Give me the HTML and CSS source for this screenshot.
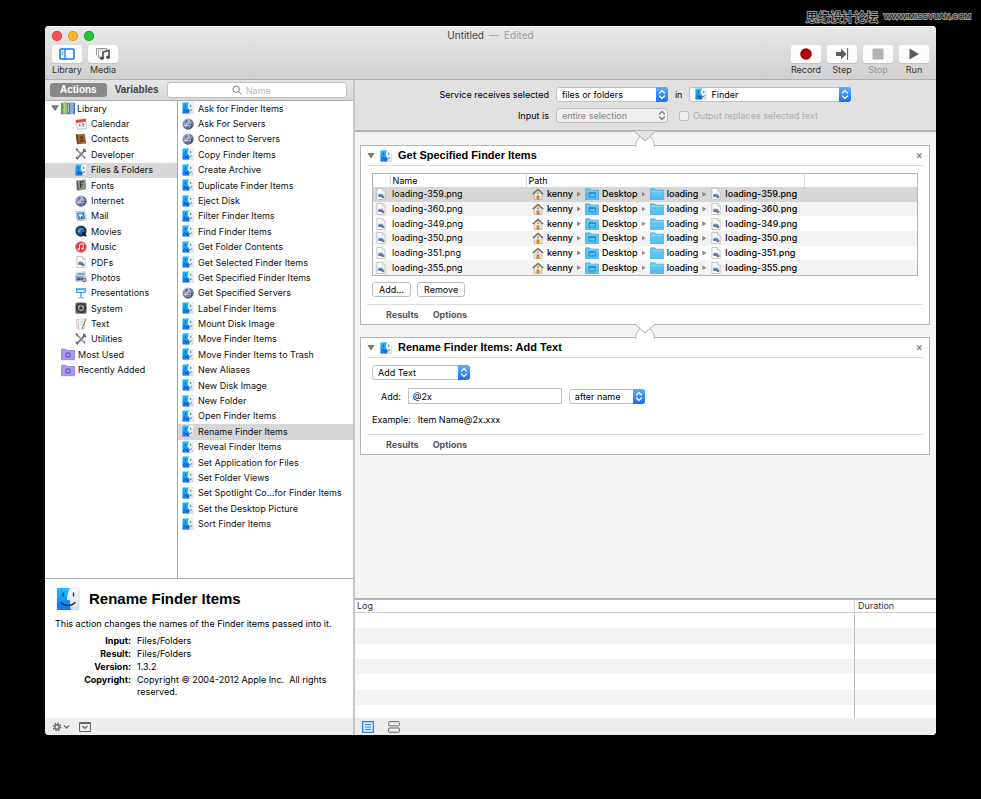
FILE: index.html
```html
<!DOCTYPE html>
<html lang="en">
<head>
    <meta charset="UTF-8">
    <meta name="viewport" content="width=device-width, initial-scale=1.0">
    <title>Untitled - Edited</title>
    <link rel="stylesheet" href="styles.css">
</head>
<body>
    <!-- Icon set -->
    <svg class="sprite" aria-hidden="true">
        <defs>
            <linearGradient id="blue" x1="0" y1="0" x2="0" y2="1"><stop offset="0" stop-color="#19c3fb"/><stop offset="1" stop-color="#1670f0"/></linearGradient>
            <linearGradient id="pale" x1="0" y1="0" x2="0" y2="1"><stop offset="0" stop-color="#fafbfd"/><stop offset="1" stop-color="#d5dfec"/></linearGradient>
            <radialGradient id="ball" cx=".35" cy=".3" r=".75"><stop offset="0" stop-color="#d6dcf2"/><stop offset=".5" stop-color="#8d96b8"/><stop offset="1" stop-color="#3c4468"/></radialGradient>
            <linearGradient id="sky" x1="0" y1="0" x2="0" y2="1"><stop offset="0" stop-color="#6ccdf8"/><stop offset="1" stop-color="#4fbcf2"/></linearGradient>
        </defs>
        <symbol id="finder" viewBox="0 0 24 24">
            <rect x="1" y="1" width="22" height="22" rx="1" fill="url(#pale)" stroke="#c3cbd5" stroke-width=".6"/>
            <path d="M2 1h12c-2 4-3 8-3 12h3c0 4 0 7 1 10H2a1 1 0 0 1-1-1V2a1 1 0 0 1 1-1z" fill="url(#blue)"/>
            <path d="M7 6v3M17.500 6v3M5 15.500c3.500 4 10.500 4 14 0" fill="none" stroke="#153a66" stroke-width="1.400" stroke-linecap="round"/>
        </symbol>
        <symbol id="globe" viewBox="0 0 16 16">
            <circle cx="8" cy="8" r="7.500" fill="url(#ball)"/>
            <path d="M3 4l3-2 2 2-1 2-2 1-1 2-2-1zM8 9l3-2 3 1-1 3-3 3-1-3zM10 2l3 2-2 1z" fill="#3f4b80" opacity=".75"/>
            <path d="M5 3c-2 2-2 6 0 9M3 10h9M9 2c3 4 3 8 0 12" stroke="#e4e9f8" stroke-width=".7" fill="none"/>
        </symbol>
        <symbol id="calendar" viewBox="0 0 16 16">
            <path d="M1 3l13-2 1.500 13L3 15z" fill="#f7f7f7" stroke="#999" stroke-width=".7"/>
            <path d="M1 3l13-2 .5 4L1.500 6.500z" fill="#e2463d"/>
            <path d="M5.500 8.500l1-.5v4M9 8h3l-1.500 4" stroke="#555" fill="none"/>
        </symbol>
        <symbol id="contacts" viewBox="0 0 16 16">
            <path d="M1 2l12-1 2 13-12 1z" fill="#9a6a33"/><path d="M1 2l2-.2 2 13-2 .2z" fill="#5f3d1b"/>
            <circle cx="9" cy="6" r="2" fill="#5f3d1b"/><path d="M6 12c0-4 6-4 6.500-1z" fill="#5f3d1b"/>
        </symbol>
        <symbol id="tools" viewBox="0 0 16 16">
            <path d="M2 2l11 11M13.500 2.500L3 14" stroke="#6b6e78" stroke-width="2.200" stroke-linecap="round"/>
            <path d="M3 3l9 9" stroke="#c5c9d4" stroke-width=".8"/>
            <path d="M11 1l1 3 3 1M1 1l3 1M1 12l3 3" stroke="#575a64" stroke-width="1.500" fill="none"/>
        </symbol>
        <symbol id="fonts" viewBox="0 0 16 16">
            <path d="M2 2l12-1.500 1 13L4 15.500 2 14z" fill="#8b9591"/><path d="M2 2l2 1 1 12.500L3 14z" fill="#4f5956"/>
            <path d="M7.500 12V4l4-.5M7.500 8l3-.3" stroke="#343c39" stroke-width="1.500" fill="none"/>
        </symbol>
        <symbol id="mail" viewBox="0 0 16 16">
            <path d="M1 2l12-1 2 12-12 1.500z" fill="#f5f5f5" stroke="#8d98a5" stroke-width=".8"/>
            <path d="M2.500 3.500l9.500-1 1.500 9.500-9.500 1z" fill="#3d85d4"/>
            <path d="M4 5l3 1 1-2 2 3 2 3-3-1-2 2-1-3z" fill="#e6f0fa"/><path d="M8 8l3 1-2 3z" fill="#394d67"/>
        </symbol>
        <symbol id="movies" viewBox="0 0 16 16">
            <circle cx="8" cy="8" r="7.500" fill="#33363b"/><circle cx="7.500" cy="7.500" r="4.500" fill="#1670c9"/>
            <path d="M4 9c1-4 4-5 7-4-3 0-4 2-5 5z" fill="#49c3f5"/><path d="M9 10l3-1 4 6h-4z" fill="#191b20"/>
        </symbol>
        <symbol id="music" viewBox="0 0 16 16">
            <circle cx="8" cy="8" r="7.500" fill="#ea2a3b"/><circle cx="8" cy="8" r="6.800" fill="none" stroke="#f98692"/>
            <path d="M6 11V4.500l5-1V10" fill="none" stroke="#fff" stroke-width="1.300"/><circle cx="5" cy="11" r="1.500" fill="#fff"/><circle cx="10" cy="10" r="1.500" fill="#fff"/>
        </symbol>
        <symbol id="doc" viewBox="0 0 16 16">
            <path d="M2.500.500h7.500l3.500 3.500v11.500h-11z" fill="#fcfcfc" stroke="#b0b0b0"/><path d="M10 .5V4h3.500" fill="#eee" stroke="#b0b0b0" stroke-width=".8"/>
            <path d="M4.500 7.500h6v4h-6z" fill="#6b9bd8"/><path d="M4.500 10l2-1 2 1 2-1v2.500h-6z" fill="#566c8c"/><circle cx="10.500" cy="11.500" r="2" fill="#77797e"/>
        </symbol>
        <symbol id="photos" viewBox="0 0 16 16">
            <path d="M2 2l12-1 .5 9-12 1z" fill="#f3f3f3" stroke="#aaa" stroke-width=".7"/><path d="M3 3l10-.8.2 3L3.200 6z" fill="#6da5d9"/>
            <path d="M0 6l12-1 1 8-12 1z" fill="#eee" stroke="#999" stroke-width=".7"/><path d="M1 7l10-.8.5 5.500L2 12.500z" fill="#6ea0d2"/><path d="M2 11l3-2 3 1 3-1 .5 3L2 12.500z" fill="#42627d"/>
            <circle cx="12.500" cy="12" r="3" fill="#6f6f6f"/><circle cx="12.500" cy="12" r="1.300" fill="#ddd"/>
        </symbol>
        <symbol id="keynote" viewBox="0 0 16 16">
            <path d="M1 1.500h14l-1 6.500H2z" fill="#2f9be6"/><path d="M3 3.500h10l-.5 3h-9z" fill="#e4f3fd"/>
            <path d="M8 8v6" stroke="#2f9be6" stroke-width="1.500"/><path d="M4.500 14.500h7" stroke="#848b92" stroke-width="1.300"/>
        </symbol>
        <symbol id="system" viewBox="0 0 16 16">
            <rect x=".5" y=".5" width="15" height="15" rx="2" fill="#66686b"/><circle cx="8" cy="8" r="5.500" fill="none" stroke="#1f2022" stroke-width="2.500" stroke-dasharray="1.800 .8"/>
            <circle cx="8" cy="8" r="4.200" fill="#a4a6a9"/><circle cx="8" cy="8" r="2" fill="#333"/><path d="M8 8V4M8 8l3.500 2M8 8l-3.500 2" stroke="#333"/>
        </symbol>
        <symbol id="text" viewBox="0 0 16 16">
            <path d="M2 2l10-1 1 13-10 1z" fill="#fafafa" stroke="#b5b5b5" stroke-width=".8"/><path d="M4 3l1 11" stroke="#e59999"/>
            <path d="M6 5l5-.5M6 7l5-.5M6.500 9l4-.4" stroke="#bbb" stroke-width=".7"/><path d="M14.500 1l-4 11-1 2.500" stroke="#6c6c6c" stroke-width="1.300" fill="none"/>
        </symbol>
        <symbol id="books" viewBox="0 0 16 16">
            <path d="M0 2h3v13H0z" fill="#5f9c43"/><path d="M3 1h4v14H3z" fill="#89c264"/><path d="M7 2h4v13H7z" fill="#7c62c0"/><path d="M11 1h3v14h-3z" fill="#78b9e2"/><path d="M14 2h2v13h-2z" fill="#566fa8"/>
            <path d="M1 1h13M4.500 3v10M8.500 4v9" stroke="#d9ead0" stroke-width=".8"/>
        </symbol>
        <symbol id="smart" viewBox="0 0 16 14">
            <path d="M.5 1.500h5l1.500 1.500h8.500v10.500H.5z" fill="#a99bed" stroke="#8e80d8"/><circle cx="8" cy="8" r="2.500" fill="none" stroke="#7563ca" stroke-width="1.600"/>
        </symbol>
        <symbol id="folder" viewBox="0 0 16 14">
            <path d="M.5 1h5l1.500 1.500h8.500v11H.5z" fill="url(#sky)" stroke="#3aa3da" stroke-width=".8"/><path d="M1 4h14" stroke="#a5e1fb" stroke-width=".6"/>
        </symbol>
        <symbol id="desktop" viewBox="0 0 16 14">
            <path d="M.5 1h5l1.500 1.500h8.500v11H.5z" fill="url(#sky)" stroke="#3aa3da" stroke-width=".8"/><path d="M4.500 5.500h7.500v5H4.500zM4.500 6.300H12" fill="none" stroke="#1c86c8"/>
        </symbol>
        <symbol id="home" viewBox="0 0 16 16">
            <path d="M3 8l5-5 5 5v7.500H3z" fill="#efe9e0" stroke="#999" stroke-width=".8"/><path d="M1 8L8 2l7 6" fill="none" stroke="#8a6a4c" stroke-width="1.900"/>
            <path d="M6 10h4v5.500H6z" fill="#e37e1d"/><circle cx="8" cy="7" r="1.200" fill="#5c9be0"/>
        </symbol>
        <symbol id="updown" viewBox="0 0 12 14">
            <path d="M3.500 5.500L6 3l2.500 2.500M3.500 8.500L6 11l2.500-2.500" fill="none" stroke="currentColor" stroke-width="1.200" stroke-linecap="round" stroke-linejoin="round"/>
        </symbol>
        <symbol id="joint" viewBox="0 0 20 16">
            <path d="M0 16C0 11 2 8 5 6h10c3 2 5 5 5 10z" fill="#fff"/>
            <path d="M.5 16C.5 11 2 8 5 6M19.500 16C19.500 11 18 8 15 6" fill="none" stroke="#b5b5b5"/>
            <path d="M0 0h20v1L10 10 0 1z" fill="currentColor"/><path d="M0 1l10 9 10-9" fill="none" stroke="#a8a8a8"/>
        </symbol>
    </svg>

    <header class="watermark"><span class="forum">思缘设计论坛</span> <span class="site">WWW.MISSYUAN.COM</span></header>

    <div class="window">
        <div class="toolbar">
            <div class="titlebar">
                <div class="lights"><button class="light red" aria-label="Close"></button><button class="light yellow" aria-label="Minimize"></button><button class="light green" aria-label="Zoom"></button></div>
                <div class="title">Untitled<span class="edited">—</span><span class="edited">Edited</span></div>
            </div>
            <div class="tools">
                <button class="tool"><span class="face"><svg width="16" height="12" viewBox="0 0 16 12"><rect x="1" y="1" width="14" height="10" rx="1" fill="#fff" stroke="#1478f0" stroke-width="1.600"/><path d="M6 1v10" stroke="#1478f0" stroke-width="1.300"/><path d="M2.500 4h2M2.500 6h2" stroke="#1478f0"/></svg></span>Library</button>
                <button class="tool"><span class="face"><svg width="16" height="14" viewBox="0 0 16 14"><path d="M6 10H3.500V3M12 2V3M1.500 8.500V1.500h10v2" fill="none" stroke="#999"/><path d="M3.500 3h9M3.500 3v8h3" fill="none" stroke="#aaa" stroke-width=".8"/><path d="M8 11V5l6-1.500V10" fill="none" stroke="#4d4d4d" stroke-width="1.600"/><circle cx="7" cy="11.300" r="1.800" fill="#4d4d4d"/><circle cx="13" cy="10.300" r="1.800" fill="#4d4d4d"/></svg></span>Media</button>
                <button class="tool push"><span class="face"><svg width="12" height="12" viewBox="0 0 12 12"><circle cx="6" cy="6" r="5.800" fill="#b00303"/></svg></span>Record</button>
                <button class="tool"><span class="face"><svg width="14" height="12" viewBox="0 0 14 12"><path d="M1 4h5V.8L11.500 6 6 11.200V8H1z" fill="#5c5c5c"/><path d="M12.600 0v12" stroke="#5c5c5c"/></svg></span>Step</button>
                <button class="tool" disabled><span class="face"><svg width="12" height="12" viewBox="0 0 12 12"><path d="M.5.500h11v11H.5z" fill="#b2b2b2"/></svg></span>Stop</button>
                <button class="tool"><span class="face"><svg width="12" height="12" viewBox="0 0 12 12"><path d="M1.500.500L11 6l-9.500 5.500z" fill="#5c5c5c"/></svg></span>Run</button>
            </div>
        </div>

        <div class="content">
            <aside class="sidebar">
                <div class="tabs">
                    <button class="tab active">Actions</button>
                    <button class="tab">Variables</button>
                    <label class="search">
                        <svg width="10" height="10" viewBox="0 0 10 10"><circle cx="4.200" cy="4.200" r="3.200" fill="none" stroke="#777"/><path d="M6.500 6.500L9.500 9.500" stroke="#777"/></svg>
                        <input type="text" placeholder="Name" aria-label="Name">
                    </label>
                </div>
                <div class="browser">
                    <ul class="list categories">
                        <li class="top"><span class="triangle"></span><svg><use href="#books"/></svg>Library</li>
                        <li><svg><use href="#calendar"/></svg>Calendar</li>
                        <li><svg><use href="#contacts"/></svg>Contacts</li>
                        <li><svg><use href="#tools"/></svg>Developer</li>
                        <li class="selected"><svg><use href="#finder"/></svg>Files &amp; Folders</li>
                        <li><svg><use href="#fonts"/></svg>Fonts</li>
                        <li><svg><use href="#globe"/></svg>Internet</li>
                        <li><svg><use href="#mail"/></svg>Mail</li>
                        <li><svg><use href="#movies"/></svg>Movies</li>
                        <li><svg><use href="#music"/></svg>Music</li>
                        <li><svg><use href="#doc"/></svg>PDFs</li>
                        <li><svg><use href="#photos"/></svg>Photos</li>
                        <li><svg><use href="#keynote"/></svg>Presentations</li>
                        <li><svg><use href="#system"/></svg>System</li>
                        <li><svg><use href="#text"/></svg>Text</li>
                        <li><svg><use href="#tools"/></svg>Utilities</li>
                        <li class="top smart"><svg><use href="#smart"/></svg>Most Used</li>
                        <li class="top smart"><svg><use href="#smart"/></svg>Recently Added</li>
                    </ul>
                    <ul class="list actions">
                        <li><svg><use href="#finder"/></svg>Ask for Finder Items</li>
                        <li><svg><use href="#globe"/></svg>Ask For Servers</li>
                        <li><svg><use href="#globe"/></svg>Connect to Servers</li>
                        <li><svg><use href="#finder"/></svg>Copy Finder Items</li>
                        <li><svg><use href="#finder"/></svg>Create Archive</li>
                        <li><svg><use href="#finder"/></svg>Duplicate Finder Items</li>
                        <li><svg><use href="#finder"/></svg>Eject Disk</li>
                        <li><svg><use href="#finder"/></svg>Filter Finder Items</li>
                        <li><svg><use href="#finder"/></svg>Find Finder Items</li>
                        <li><svg><use href="#finder"/></svg>Get Folder Contents</li>
                        <li><svg><use href="#finder"/></svg>Get Selected Finder Items</li>
                        <li><svg><use href="#finder"/></svg>Get Specified Finder Items</li>
                        <li><svg><use href="#globe"/></svg>Get Specified Servers</li>
                        <li><svg><use href="#finder"/></svg>Label Finder Items</li>
                        <li><svg><use href="#finder"/></svg>Mount Disk Image</li>
                        <li><svg><use href="#finder"/></svg>Move Finder Items</li>
                        <li><svg><use href="#finder"/></svg>Move Finder Items to Trash</li>
                        <li><svg><use href="#finder"/></svg>New Aliases</li>
                        <li><svg><use href="#finder"/></svg>New Disk Image</li>
                        <li><svg><use href="#finder"/></svg>New Folder</li>
                        <li><svg><use href="#finder"/></svg>Open Finder Items</li>
                        <li class="selected"><svg><use href="#finder"/></svg>Rename Finder Items</li>
                        <li><svg><use href="#finder"/></svg>Reveal Finder Items</li>
                        <li><svg><use href="#finder"/></svg>Set Application for Files</li>
                        <li><svg><use href="#finder"/></svg>Set Folder Views</li>
                        <li><svg><use href="#finder"/></svg>Set Spotlight Co...for Finder Items</li>
                        <li><svg><use href="#finder"/></svg>Set the Desktop Picture</li>
                        <li><svg><use href="#finder"/></svg>Sort Finder Items</li>
                    </ul>
                </div>
                <section class="info">
                    <div class="info-head"><svg width="24" height="24"><use href="#finder"/></svg><h1>Rename Finder Items</h1></div>
                    <p>This action changes the names of the Finder items passed into it.</p>
                    <dl>
                        <dt>Input:</dt><dd>Files/Folders</dd>
                        <dt>Result:</dt><dd>Files/Folders</dd>
                        <dt>Version:</dt><dd>1.3.2</dd>
                        <dt>Copyright:</dt><dd>Copyright © 2004-2012 Apple Inc. &nbsp;All rights reserved.</dd>
                    </dl>
                </section>
                <footer class="bottombar">
                    <button class="icon-btn" aria-label="Action menu"><svg width="18" height="10" viewBox="0 0 18 10"><circle cx="5" cy="5" r="3.600" fill="none" stroke="#666" stroke-width="1.600" stroke-dasharray="1.500 1.320"/><circle cx="5" cy="5" r="2.200" fill="none" stroke="#666" stroke-width="1.400"/><path d="M12 3.500l2.500 2.500L17 3.500" fill="none" stroke="#666" stroke-width="1.300"/></svg></button>
                    <button class="icon-btn" aria-label="Hide description"><svg width="12" height="10" viewBox="0 0 12 10"><path d="M.5.500h11v9H.5zM.5 1.500h11" fill="none" stroke="#666"/><path d="M3.500 4L6 6.500 8.500 4" fill="none" stroke="#666" stroke-width="1.200"/></svg></button>
                </footer>
            </aside>

            <main class="workflow">
                <div class="service">
                    <label for="receives">Service receives selected</label>
                    <span class="popup"><select id="receives"><option>files or folders</option></select><svg><use href="#updown"/></svg></span>
                    <label for="app">in</label>
                    <span class="popup with-icon"><svg class="app-icon"><use href="#finder"/></svg><select id="app"><option>Finder</option></select><svg><use href="#updown"/></svg></span>
                    <label for="input">Input is</label>
                    <span class="popup off"><select id="input" disabled><option>entire selection</option></select><svg><use href="#updown"/></svg></span>
                    <label class="check"><input type="checkbox" disabled>Output replaces selected text</label>
                </div>

                <div class="canvas">
                    <section class="card">
                        <svg class="joint first"><use href="#joint"/></svg>
                        <div class="card-head"><span class="triangle"></span><svg><use href="#finder"/></svg><h2>Get Specified Finder Items</h2><button class="close" aria-label="Remove action">✕</button></div>
                        <div class="card-body">
                            <div class="files">
                                <table>
                                    <colgroup><col class="c-icon"><col class="c-name"><col class="c-path"><col></colgroup>
                                    <thead><tr><th></th><th>Name</th><th>Path</th><th></th></tr></thead>
                                    <tbody>
                                        <tr class="selected"><td><svg><use href="#doc"/></svg></td><td>loading-359.png</td><td colspan="2"><div class="path"><svg><use href="#home"/></svg>kenny<i></i><svg class="fold"><use href="#desktop"/></svg>Desktop<i></i><svg class="fold"><use href="#folder"/></svg>loading<i></i><svg><use href="#doc"/></svg>loading-359.png</div></td></tr>
                                        <tr><td><svg><use href="#doc"/></svg></td><td>loading-360.png</td><td colspan="2"><div class="path"><svg><use href="#home"/></svg>kenny<i></i><svg class="fold"><use href="#desktop"/></svg>Desktop<i></i><svg class="fold"><use href="#folder"/></svg>loading<i></i><svg><use href="#doc"/></svg>loading-360.png</div></td></tr>
                                        <tr><td><svg><use href="#doc"/></svg></td><td>loading-349.png</td><td colspan="2"><div class="path"><svg><use href="#home"/></svg>kenny<i></i><svg class="fold"><use href="#desktop"/></svg>Desktop<i></i><svg class="fold"><use href="#folder"/></svg>loading<i></i><svg><use href="#doc"/></svg>loading-349.png</div></td></tr>
                                        <tr><td><svg><use href="#doc"/></svg></td><td>loading-350.png</td><td colspan="2"><div class="path"><svg><use href="#home"/></svg>kenny<i></i><svg class="fold"><use href="#desktop"/></svg>Desktop<i></i><svg class="fold"><use href="#folder"/></svg>loading<i></i><svg><use href="#doc"/></svg>loading-350.png</div></td></tr>
                                        <tr><td><svg><use href="#doc"/></svg></td><td>loading-351.png</td><td colspan="2"><div class="path"><svg><use href="#home"/></svg>kenny<i></i><svg class="fold"><use href="#desktop"/></svg>Desktop<i></i><svg class="fold"><use href="#folder"/></svg>loading<i></i><svg><use href="#doc"/></svg>loading-351.png</div></td></tr>
                                        <tr><td><svg><use href="#doc"/></svg></td><td>loading-355.png</td><td colspan="2"><div class="path"><svg><use href="#home"/></svg>kenny<i></i><svg class="fold"><use href="#desktop"/></svg>Desktop<i></i><svg class="fold"><use href="#folder"/></svg>loading<i></i><svg><use href="#doc"/></svg>loading-355.png</div></td></tr>
                                    </tbody>
                                </table>
                            </div>
                            <div class="buttons"><button class="btn">Add...</button><button class="btn">Remove</button></div>
                        </div>
                        <div class="card-foot"><button>Results</button><button>Options</button></div>
                    </section>

                    <section class="card">
                        <svg class="joint"><use href="#joint"/></svg>
                        <div class="card-head"><span class="triangle"></span><svg><use href="#finder"/></svg><h2>Rename Finder Items: Add Text</h2><button class="close" aria-label="Remove action">✕</button></div>
                        <div class="card-body rename">
                            <span class="popup mode"><select aria-label="Rename mode"><option>Add Text</option></select><svg><use href="#updown"/></svg></span>
                            <div class="add-row">
                                <label for="add">Add:</label>
                                <input type="text" id="add" value="@2x">
                                <span class="popup place"><select aria-label="Position"><option>after name</option></select><svg><use href="#updown"/></svg></span>
                            </div>
                            <div class="example"><span>Example:</span><span>Item Name@2x.xxx</span></div>
                        </div>
                        <div class="card-foot"><button>Results</button><button>Options</button></div>
                    </section>
                </div>

                <section class="log">
                    <div class="log-head"><span>Log</span><span class="duration">Duration</span></div>
                    <div class="log-rows"><div></div><div></div><div></div><div></div><div></div><div></div><div></div></div>
                </section>
                <footer class="bottombar views">
                    <button class="icon-btn" aria-label="Show log"><svg width="12" height="12" viewBox="0 0 12 12"><path d="M.7.700h10.600v10.600H.7z" fill="#e3effd" stroke="#2a80ee" stroke-width="1.300"/><path d="M3 3.500h6M3 6h6M3 8.500h6" stroke="#2a80ee"/></svg></button>
                    <button class="icon-btn" aria-label="Show variables"><svg width="12" height="12" viewBox="0 0 12 12"><rect x=".6" y=".6" width="10.800" height="4.300" rx="1" fill="none" stroke="#666"/><rect x=".6" y="7" width="10.800" height="4.300" rx="1" fill="none" stroke="#666"/></svg></button>
                </footer>
            </main>
        </div>
    </div>
</body>
</html>
```
FILE: styles.css
```css
* {
    box-sizing: border-box;
}

body {
    margin: 0;
    min-height: 100vh;
    display: flex;
    flex-direction: column;
    background: #000;
    color: #111;
    font-family: Inter, "Liberation Sans", Arial, sans-serif;
    font-size: 9px;
    line-height: 13px;
}

button, input, select {
    font: inherit;
    color: inherit;
    margin: 0;
    padding: 0;
    border: 0;
    background: none;
}

svg {
    display: block;
    flex: none;
}

.sprite {
    position: absolute;
    width: 0;
    height: 0;
}

/* Forum mark above the window */
.watermark {
    display: flex;
    justify-content: flex-end;
    align-items: center;
    gap: 6px;
    height: 26px;
    padding: 6px 10px 0 0;
    color: #000;
    -webkit-text-stroke: 2px #999;
    paint-order: stroke;
}

.forum {
    font: 12px "Liberation Sans", "Noto Sans CJK SC", sans-serif;
}

.site {
    font: 8px "Liberation Sans", sans-serif;
}

.window {
    flex: 1;
    display: flex;
    flex-direction: column;
    margin: 0 45px 64px;
    border-radius: 4px;
    overflow: hidden;
    background: #fff;
}

/* Toolbar */
.toolbar {
    height: 54px;
    padding: 1px 7px 0;
    background: linear-gradient(#e9e9e9, #d0d0d0);
    border-bottom: 1px solid #b0b0b0;
    box-shadow: inset 0 1px #f6f6f6;
}

.titlebar {
    display: grid;
    grid-template-columns: 1fr auto 1fr;
    align-items: center;
    height: 17px;
}

.lights {
    display: flex;
    gap: 6px;
}

.light {
    width: 10px;
    height: 10px;
    border-radius: 50%;
}

.red { background: #fc5650; box-shadow: 0 0 0 1px #e2463f inset; }
.yellow { background: #fdb52b; box-shadow: 0 0 0 1px #e09e22 inset; }
.green { background: #28c23c; box-shadow: 0 0 0 1px #1fa930 inset; }

.title {
    font-size: 10px;
    color: #444;
}

.edited {
    color: #9c9c9c;
    margin-left: 5px;
}

.tools {
    display: flex;
    gap: 6px;
    padding-top: 1px;
}

.tool {
    display: flex;
    flex-direction: column;
    align-items: center;
    width: 30px;
    color: #333;
    white-space: nowrap;
}

.tool:disabled {
    color: #999;
}

.push {
    margin-left: auto;
}

.face {
    display: flex;
    align-items: center;
    justify-content: center;
    width: 30px;
    height: 18px;
    border-radius: 3px;
    background: #fcfcfc;
    box-shadow: 0 1px #c2c2c2;
}

.content {
    flex: 1;
    display: flex;
    min-height: 0;
}

/* Sidebar */
.sidebar {
    display: flex;
    flex-direction: column;
    width: 308px;
}

.tabs {
    display: flex;
    align-items: center;
    height: 21px;
    padding: 0 6px 0 5px;
    background: linear-gradient(#e6e6e6, #d6d6d6);
    border-bottom: 1px solid #b0b0b0;
}

.tab {
    height: 14px;
    padding: 0 8px;
    border-radius: 3px;
    font: bold 10px/14px "Liberation Sans", Arial, sans-serif;
    color: #444;
}

.tab.active {
    padding: 0 10px;
    background: #888;
    color: #fff;
}

.search {
    flex: 1;
    display: flex;
    align-items: center;
    justify-content: center;
    gap: 4px;
    height: 16px;
    background: #fff;
    border: 1px solid #c2c2c2;
    border-radius: 3px;
}

.search input {
    width: 36px;
}

.search input::placeholder {
    color: #b8b8b8;
}

.browser {
    flex: 1;
    display: flex;
}

.list {
    display: grid;
    grid-template-rows: repeat(31, minmax(0, 1fr));
    margin: 0;
    padding: 0;
    list-style: none;
}

.list li {
    display: flex;
    align-items: center;
    gap: 4px;
    min-width: 0;
    padding-bottom: 1px;
    white-space: nowrap;
}

.list svg {
    width: 12px;
    height: 12px;
}

.list .selected {
    background: #d6d6d6;
}

.categories {
    width: 133px;
    border-right: 1px solid #a8a8a8;
}

.categories li {
    padding-left: 30px;
}

.categories .top {
    gap: 2px;
    padding-left: 6px;
}

.categories .top svg {
    width: 14px;
    height: 14px;
}

.categories .smart {
    gap: 3px;
    padding-left: 16px;
}

.actions {
    flex: 1;
}

.actions li {
    padding-left: 4px;
}

.triangle {
    width: 8px;
    height: 6px;
    background: #777;
    clip-path: polygon(0 0, 100% 0, 50% 100%);
}

/* Description of the chosen action */
.info {
    height: 140px;
    padding: 8px 10px 0;
    border-top: 1px solid #a8a8a8;
    color: #000;
}

.info-head {
    display: flex;
    align-items: center;
    gap: 9px;
    padding-left: 1px;
}

.info h1 {
    margin: 0;
    font: bold 15px/24px "Liberation Sans", Arial, sans-serif;
}

.info p {
    margin: 6px 0 5px;
    white-space: nowrap;
}

.info dl {
    display: grid;
    grid-template-columns: 76px 1fr;
    gap: 1px 6px;
    margin: 0;
    line-height: 12px;
}

.info dt {
    font-weight: bold;
    text-align: right;
}

.info dd {
    margin: 0;
}

.bottombar {
    display: flex;
    align-items: center;
    gap: 9px;
    height: 17px;
    padding: 0 7px;
    background: #ededed;
}

.views {
    gap: 14px;
}

/* Workflow */
.workflow {
    flex: 1;
    display: flex;
    flex-direction: column;
    border-left: 2px solid #c6c6c6;
    min-width: 0;
    color: #000;
}

.service {
    display: grid;
    grid-template-columns: max-content 112px max-content 162px;
    justify-content: center;
    align-content: center;
    align-items: center;
    gap: 6px 7px;
    height: 52px;
    background: #e1e1e1;
    border-bottom: 2px solid #b2b2b2;
}

.service label {
    text-align: right;
}

.service .check {
    grid-column: 3 / 5;
    display: flex;
    align-items: center;
    gap: 4px;
    padding-left: 4px;
    color: #adadad;
}

.check input {
    appearance: none;
    width: 10px;
    height: 10px;
    border: 1px solid #c2c2c2;
    border-radius: 2px;
    background: #eee;
}

.popup {
    position: relative;
    display: block;
    height: 15px;
}

.popup select {
    appearance: none;
    display: block;
    width: 100%;
    height: 15px;
    padding-left: 5px;
    background: #fff;
    border: 1px solid #c0c0c0;
    border-radius: 3px;
    line-height: 13px;
}

.popup select + svg {
    position: absolute;
    top: 0;
    right: 0;
    width: 12px;
    height: 15px;
    border-radius: 0 3px 3px 0;
    background: linear-gradient(#5badfc, #1370f8);
    color: #fff;
    pointer-events: none;
}

.popup.off select {
    background: #eee;
    color: #858585;
    opacity: 1;
}

.popup.off select + svg {
    background: none;
    color: #777;
}

.with-icon select {
    padding-left: 21px;
}

.popup .app-icon {
    position: absolute;
    top: 1px;
    left: 6px;
    width: 12px;
    height: 12px;
}

.canvas {
    flex: 1;
    display: flex;
    flex-direction: column;
    gap: 12px;
    padding: 13px 6px 13px 5px;
    background: #f4f4f4;
}

.card {
    position: relative;
    padding: 0 6px;
    background: #fff;
    border: 1px solid #b5b5b5;
}

/* Connector drawn over the edges of two neighbouring cards */
.joint {
    position: absolute;
    top: -15px;
    left: 50%;
    width: 20px;
    height: 16px;
    margin-left: -10px;
    color: #fff;
}

.joint.first {
    color: #e1e1e1;
}

.card-head {
    display: flex;
    align-items: center;
    height: 20px;
    border-bottom: 1px solid #dedede;
}

.card-head svg {
    width: 12px;
    height: 12px;
    margin: 0 6px 0 5px;
}

.card-head h2 {
    flex: 1;
    margin: 0;
    font: bold 11px/19px "Liberation Sans", Arial, sans-serif;
}

.close {
    color: #666;
    font: 9px/12px "DejaVu Sans", sans-serif;
}

.card-body {
    padding: 7px 5px;
}

.files {
    border: 1px solid #b5b5b5;
}

.files table {
    width: 100%;
    height: 101px;
    table-layout: fixed;
    border-collapse: collapse;
}

.c-icon { width: 17px; }
.c-name { width: 136px; }
.c-path { width: 278px; }

.files th {
    height: 13px;
    padding: 0 0 0 2px;
    font-weight: normal;
    line-height: 12px;
    text-align: left;
    border-right: 1px solid #d8d8d8;
}

.files th:last-child {
    border-right: 0;
}

.files td {
    padding: 0 0 0 2px;
    line-height: 12px;
}

.files td svg {
    width: 12px;
    height: 12px;
}

.files tbody tr:nth-child(even) {
    background: #f3f3f3;
}

.files tbody .selected {
    background: #d6d6d6;
}

.path {
    display: flex;
    align-items: center;
    gap: 3px;
    padding-left: 4px;
    font-weight: 500;
}

.path .fold {
    width: 14px;
}

.path i {
    width: 4px;
    height: 5px;
    margin: 0 1px;
    background: #8a8a8a;
    clip-path: polygon(0 0, 100% 50%, 0 100%);
}

.buttons {
    display: flex;
    gap: 6px;
    margin-top: 6px;
}

.btn {
    height: 15px;
    padding: 0 6px;
    border: 1px solid #bdbdbd;
    border-radius: 3px;
    background: #fff;
}

.card-foot {
    display: flex;
    gap: 14px;
    padding: 3px 19px;
    border-top: 1px solid #dedede;
}

.card-foot button {
    font-weight: bold;
    color: #555;
}

.rename {
    display: flex;
    flex-direction: column;
    gap: 8px;
}

.mode {
    width: 98px;
}

.add-row {
    display: flex;
    align-items: center;
    gap: 7px;
    padding-left: 9px;
}

.add-row input {
    width: 154px;
    height: 16px;
    padding-left: 4px;
    border: 1px solid #c6c6c6;
}

.place {
    width: 76px;
}

.example {
    display: flex;
    gap: 7px;
    line-height: 15px;
}

/* Log */
.log {
    border-top: 2px solid #b2b2b2;
}

.log-head {
    display: flex;
    height: 13px;
    padding-left: 2px;
    border-bottom: 1px solid #cfcfcf;
    color: #333;
    line-height: 12px;
}

.duration {
    width: 82px;
    margin-left: auto;
    padding-left: 3px;
    border-left: 1px solid #d8d8d8;
}

.log-rows {
    display: grid;
    grid-template-rows: repeat(6, 7fr) 6fr;
    height: 105px;
}

.log-rows div {
    background: linear-gradient(#bbb, #bbb) right 81px top / 1px 100% no-repeat #fff;
}

.log-rows div:nth-child(even) {
    background-color: #f3f3f3;
}
```
